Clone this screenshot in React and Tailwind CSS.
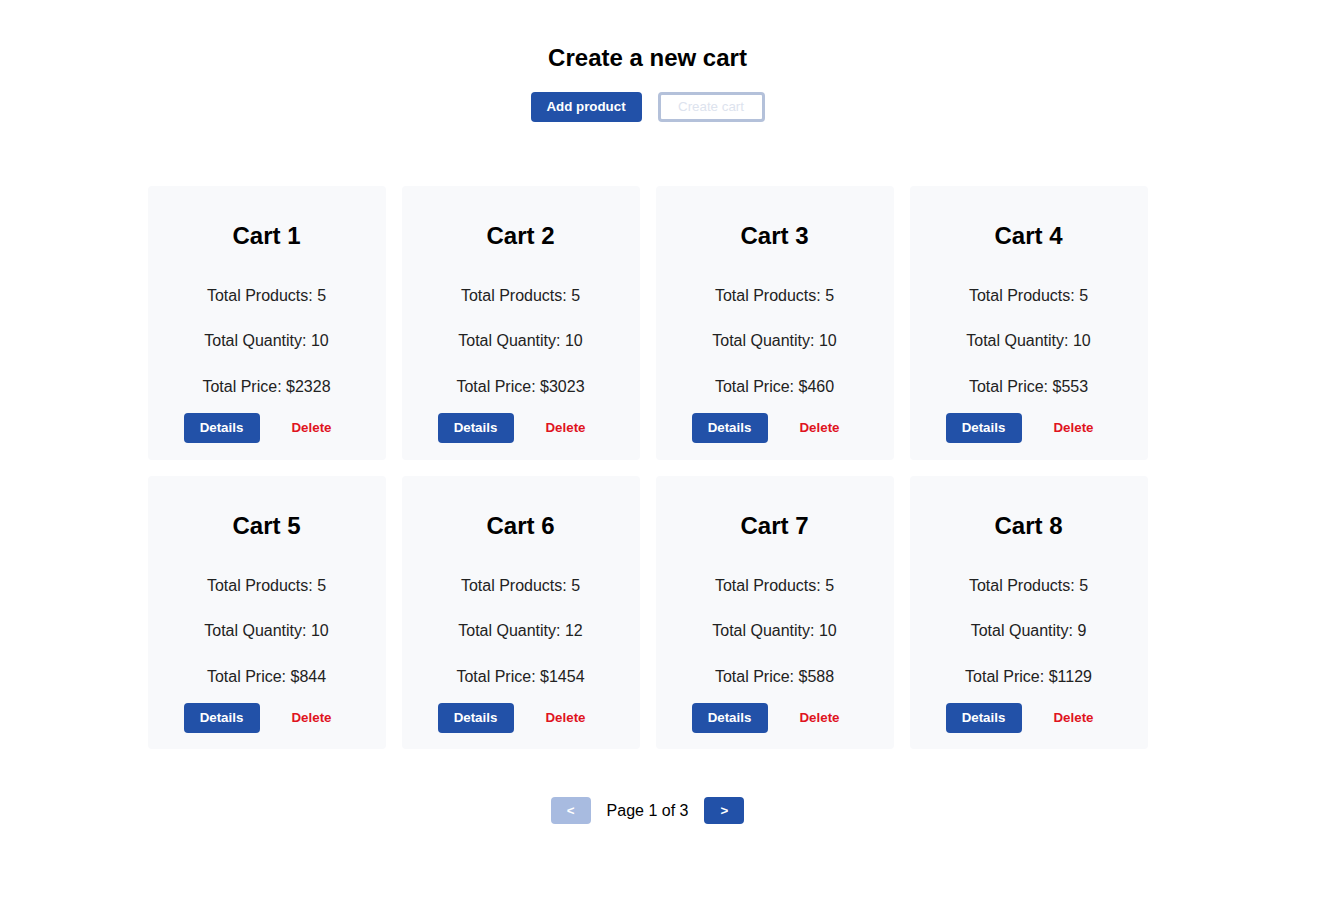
const carts = [
  { id: 1, products: 5, quantity: 10, price: 2328 },
  { id: 2, products: 5, quantity: 10, price: 3023 },
  { id: 3, products: 5, quantity: 10, price: 460 },
  { id: 4, products: 5, quantity: 10, price: 553 },
  { id: 5, products: 5, quantity: 10, price: 844 },
  { id: 6, products: 5, quantity: 12, price: 1454 },
  { id: 7, products: 5, quantity: 10, price: 588 },
  { id: 8, products: 5, quantity: 9, price: 1129 },
];

function CartCard({ cart }) {
  return (
    <div className="flex h-[273.5px] flex-col items-center rounded bg-[#f8f9fb] pt-[36px]">
      <h2 className="h-[28px] text-[24px] font-bold leading-[28px] text-black">Cart {cart.id}</h2>
      <p className="mt-[34px] h-6 text-[16px] leading-6 text-[#222]">Total Products: {cart.products}</p>
      <p className="mt-[21px] h-6 text-[16px] leading-6 text-[#222]">Total Quantity: {cart.quantity}</p>
      <p className="mt-[22px] h-6 text-[16px] leading-6 text-[#222]">Total Price: ${cart.price}</p>
      <div className="mt-[14px] flex justify-center gap-[14px]">
        <button className="h-[30px] w-[76px] rounded bg-[#2251a8] text-[13.33px] font-bold text-white">
          Details
        </button>
        <button className="h-[30px] w-[76px] text-[13.33px] font-bold text-[#e0141e]">Delete</button>
      </div>
    </div>
  );
}

export default function App() {
  return (
    <div className="min-h-screen bg-white font-['Liberation_Sans',Arial,sans-serif]">
      <div className="flex w-[1295px] flex-col items-center pt-[44px]">
        <h1 className="h-[28px] text-[24px] font-bold leading-[28px] text-black">Create a new cart</h1>
        <div className="mt-[20px] flex gap-4">
          <button className="h-[30px] w-[111px] rounded bg-[#2251a8] text-[13.33px] font-bold text-white">
            Add product
          </button>
          <button
            disabled
            className="h-[30px] w-[107px] rounded border-[3px] border-[#b4c1da] text-[13.33px] text-[#dde3ee]"
          >
            Create cart
          </button>
        </div>
        <div className="mt-[64px] grid w-[1000px] grid-cols-4 gap-4">
          {carts.map((cart) => (
            <CartCard key={cart.id} cart={cart} />
          ))}
        </div>
        <div className="mt-[48px] flex items-center gap-4">
          <button disabled className="h-[27px] w-10 rounded bg-[#a8bbe0] text-[13.33px] font-bold text-white">
            &lt;
          </button>
          <span className="text-[16px] text-black">Page 1 of 3</span>
          <button className="h-[27px] w-10 rounded bg-[#2251a8] text-[13.33px] font-bold text-white">&gt;</button>
        </div>
      </div>
    </div>
  );
}
